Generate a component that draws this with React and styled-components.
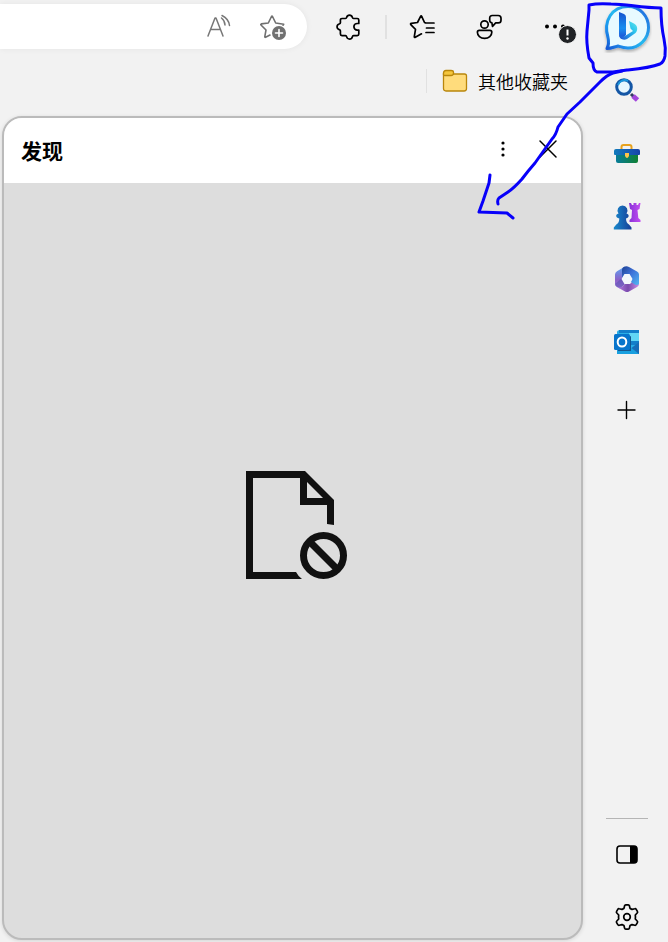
import React from "react";
import styled, { createGlobalStyle } from "styled-components";

const GlobalStyle = createGlobalStyle`
  * { box-sizing: border-box; }
  body {
    margin: 0;
    background: #f2f2f2;
    color: #000;
    font-family: "Noto Sans CJK SC", "Liberation Sans", sans-serif;
  }
`;

const Window = styled.div`
  position: relative;
  display: flex;
  min-height: 100vh;
  background: #f2f2f2;
`;

const Main = styled.main`
  flex: 1;
  min-width: 0;
  display: flex;
  flex-direction: column;
`;

const Toolbar = styled.header`
  display: flex;
  align-items: center;
  gap: 6px;
  height: 53px;
`;

const AddressBar = styled.div`
  flex: 1;
  min-width: 0;
  display: flex;
  align-items: center;
  height: 45px;
  margin-right: 6px;
  padding-right: 7px;
  border-radius: 0 23px 23px 0;
  background: #fff;
  box-shadow: 0 0 6px rgba(0, 0, 0, 0.06);
`;

const AddressInput = styled.input`
  flex: 1;
  min-width: 0;
  height: 100%;
  border: 0;
  outline: 0;
  background: transparent;
`;

const IconButton = styled.button`
  flex: none;
  display: flex;
  align-items: center;
  justify-content: center;
  width: ${(p) => p.$width || 60}px;
  height: ${(p) => p.$height || 40}px;
  padding: 0;
  border: 0;
  background: transparent;
  color: ${(p) => p.$color || "#000"};
  cursor: pointer;
`;

const Separator = styled.span`
  width: ${(p) => p.$width || 2}px;
  height: 24px;
  background: #e1e1e1;
`;

const BookmarksBar = styled.nav`
  display: flex;
  align-items: center;
  justify-content: flex-end;
  gap: 15px;
  height: 63px;
  padding: 0 17px 8px 0;
`;

const FolderButton = styled.button`
  display: flex;
  align-items: center;
  gap: 10px;
  padding: 0;
  border: 0;
  background: transparent;
  color: #000;
  font-family: inherit;
  font-size: 18px;
  font-weight: 350;
  line-height: 26px;
  cursor: pointer;
`;

const Panel = styled.section`
  flex: 1;
  display: flex;
  flex-direction: column;
  margin: 0 2px 2px;
  border: 2px solid #bbb;
  border-radius: 20px;
  overflow: hidden;
  background: #ddd;
  box-shadow: 0 1px 4px rgba(0, 0, 0, 0.12);
`;

const PanelHeader = styled.div`
  display: flex;
  align-items: center;
  height: 65px;
  padding: 0 11px 4px 17px;
  background: #fff;
`;

const PanelTitle = styled.h1`
  flex: 1;
  margin: 0;
  padding-top: 3px;
  font-size: 21px;
  font-weight: 700;
  line-height: 30px;
`;

const PanelBody = styled.div`
  flex: 1;
  display: flex;
  align-items: center;
  justify-content: center;
  padding: 0 0 72px 8px;
`;

const Sidebar = styled.aside`
  flex: none;
  display: flex;
  flex-direction: column;
  justify-content: space-between;
  width: 83px;
  padding: 3px 0 1px;
`;

const SideGroup = styled.div`
  display: flex;
  flex-direction: column;
  align-items: center;
  gap: 15px;
`;

const AddSlot = styled.div`
  padding-top: 5px;
`;

const SideRule = styled.hr`
  width: 42px;
  height: 1px;
  margin: 0 0 -4px;
  border: 0;
  background: #b5b5b5;
`;

const InkLayer = styled.svg`
  position: absolute;
  top: 0;
  right: 0;
  pointer-events: none;
`;

const line = {
  fill: "none",
  stroke: "currentColor",
  strokeLinecap: "round",
  strokeLinejoin: "round",
};

const ReadAloud = () => (
  <svg width="26" height="26" viewBox="0 0 26 26" {...line} strokeWidth="1.500">
    <path d="M2 22 9 4h1l7 18M5 15.500h9M15.500 4c2 1.500 3.300 3.500 3.500 7M16 1.500c4 2 7 5.500 7.500 10" />
  </svg>
);

const StarAdd = () => (
  <svg width="28" height="28" viewBox="0 0 28 28" {...line} strokeWidth="1.600">
    <path d="m11 22-4.500 2.300q-.8.200-.7-.6L7 17l-5-5q-.6-.8.300-1.100L9.300 10l3.200-6.500q.5-.8 1 0L16.700 10l8 1.200-.7 1" />
    <circle cx="20" cy="20" r="7" fill="currentColor" stroke="none" />
    <path d="M20 16.500v7M16.500 20h7" stroke="#fff" />
  </svg>
);

const Puzzle = () => (
  <svg width="28" height="28" viewBox="0 0 28 28" {...line} strokeWidth="1.700">
    <path d="M7 5.500h3.500c.7 0 1-.5 1.200-1.200a2.900 2.900 0 0 1 5.600 0c.2.700.5 1.200 1.200 1.200h3.700c1 0 1.600.6 1.600 1.600v3.400h-1.600a3.300 3.300 0 0 0 0 6.600h1.600v4c0 1-.6 1.600-1.600 1.600h-3.700c-.7 0-1 .5-1.200 1.200a2.900 2.900 0 0 1-5.600 0c-.2-.7-.5-1.200-1.200-1.200H7c-1 0-1.600-.6-1.600-1.600v-3.300c0-.7-.5-1-1.200-1.200a2.900 2.900 0 0 1 0-5.600c.7-.2 1.200-.5 1.200-1.200V7.100c0-1 .6-1.600 1.600-1.600Z" />
  </svg>
);

const Favorites = () => (
  <svg width="28" height="28" viewBox="0 0 28 28" {...line} strokeWidth="1.700">
    <path d="m17 10-1.500-.5L12.700 3.300c-.3-.6-.8-.6-1.100 0L8.500 9.500l-6.200.9c-.8.100-1 .7-.5 1.200l4.700 4.700-1.200 7.300c-.1.800.4 1.100 1 .7l6.200-3.500M16.500 10H25M17.500 15H25M17 19.500h8" />
  </svg>
);

const Collaborate = () => (
  <svg width="28" height="28" viewBox="0 0 28 28" {...line} strokeWidth="1.700">
    <circle cx="9.500" cy="11.500" r="3.700" />
    <path d="M4.300 17.300h10.600c1.200 0 1.900.7 1.900 1.900 0 3.500-3 6.100-7.200 6.100s-7.200-2.600-7.200-6.100c0-1.200.7-1.900 1.900-1.900ZM17.300 2.500h5.900c1.800 0 2.800 1 2.800 2.700v2c0 1.700-1 2.700-2.800 2.700h-2.500l-3.200 3.500-.6-3.600c-1.600-.3-2.200-1.200-2.200-2.600v-2c0-1.700.8-2.700 2.600-2.700Z" />
  </svg>
);

const MoreAlert = () => (
  <svg width="60" height="36" viewBox="0 0 60 36">
    <circle cx="22" cy="17.500" r="2" />
    <circle cx="30" cy="17.500" r="2" />
    <circle cx="38" cy="17.500" r="2" />
    <circle cx="42.500" cy="25.500" r="9" fill="#202225" stroke="#f2f2f2" />
    <path d="M42.500 20.500v6" stroke="#fff" strokeWidth="2" />
    <circle cx="42.500" cy="29.500" r="1.200" fill="#fff" />
  </svg>
);

const Folder = () => (
  <svg width="26" height="24" viewBox="0 0 26 24" stroke="#b9860b" strokeWidth="1.300">
    <path d="M1.500 5h21q2 0 2 2v12.500q0 2.500-2.500 2.500H4q-2.500 0-2.500-2.500Z" fill="#ffdc7c" />
    <path d="M1.500 6V4q0-2.500 2.500-2.500h5q2.500 0 2.500 1.800V4q0 2.500-2.500 2.500H3Q1.500 6.500 1.500 6Z" fill="#f5c63c" />
  </svg>
);

const Dots = () => (
  <svg width="20" height="20" viewBox="0 0 20 20">
    <circle cx="10" cy="4" r="1.600" />
    <circle cx="10" cy="10" r="1.600" />
    <circle cx="10" cy="16" r="1.600" />
  </svg>
);

const Close = () => (
  <svg width="20" height="20" viewBox="0 0 20 20" {...line} strokeWidth="1.500">
    <path d="m2 2 16 16M18 2 2 18" />
  </svg>
);

const BlockedPage = () => (
  <svg width="102" height="108" viewBox="0 0 102 108" role="img" aria-label="无法显示页面">
    <path fill="#111" fillRule="evenodd" d="M0 0h59l29 29v25l-7-1V34H54V7H7v94h43q2 4 6 7H0ZM61 11v16h16Z" />
    <g fill="none" stroke="#111" strokeWidth="7">
      <circle cx="77.500" cy="84.500" r="20" />
      <path d="m63.500 70.500 28 28" />
    </g>
  </svg>
);

const Bing = () => (
  <svg width="50" height="52" viewBox="0 0 50 52">
    <defs>
      <linearGradient id="bingEdge" x1="0" y1="1" x2="1" y2="0">
        <stop offset="0" stopColor="#1757d3" />
        <stop offset=".25" stopColor="#1b92ed" />
        <stop offset=".5" stopColor="#25b9ef" />
        <stop offset="1" stopColor="#2460dc" />
      </linearGradient>
      <linearGradient id="bingStem" x1="0" y1="0" x2="0" y2="1">
        <stop offset="0" stopColor="#1452ce" />
        <stop offset=".6" stopColor="#188ff0" />
        <stop offset="1" stopColor="#1b49d2" />
      </linearGradient>
      <linearGradient id="bingBowl" x1="0" y1="1" x2="1" y2="0">
        <stop offset="0" stopColor="#1b4bd4" />
        <stop offset=".65" stopColor="#2cc7ed" />
        <stop offset="1" stopColor="#65e5ec" />
      </linearGradient>
      <filter id="bingShade" x="-20%" y="-20%" width="140%" height="150%">
        <feDropShadow dx="0" dy="2" stdDeviation="1.500" floodOpacity=".3" />
      </filter>
    </defs>
    <path d="M26 5.500C38 5.500 46.500 15 46.500 26.500S37 47 26 47c-5 0-7-1-10-2-4 1-7 2.500-11 2.500 2-4 2-7 1-11C1 20 10 5.500 26 5.500Z" fill="#e8faff" stroke="url(#bingEdge)" strokeWidth="3" strokeLinejoin="round" filter="url(#bingShade)" />
    <path d="m17 11 5 2q2 1 2 3v18l-4 4q-3-1-3-5Z" fill="url(#bingStem)" />
    <path d="m27 20 5 2.500c4 2 4 7 1.500 9.500L25 38c-4 2-8-.5-8-5 1 3 4 3 6 2l8-5-2.500-2.500Z" fill="url(#bingBowl)" />
  </svg>
);

const Search = () => (
  <svg width="28" height="28" viewBox="0 0 28 28" fill="none">
    <path d="m18 18 3 3" stroke="#313b60" strokeWidth="3" />
    <path d="m20 20 4.500 4" stroke="#a245dc" strokeWidth="5" />
    <circle cx="11" cy="11" r="7.300" fill="#e7f7ff" stroke="#1456a5" strokeWidth="3" />
    <path d="M5 9a7 7 0 0 1 10-4" stroke="#1b96dc" strokeWidth="2" />
  </svg>
);

const Toolbox = () => (
  <svg width="28" height="22" viewBox="0 0 28 22">
    <defs>
      <linearGradient id="boxBase"><stop stopColor="#087c99" /><stop offset="1" stopColor="#108033" /></linearGradient>
      <linearGradient id="boxLid"><stop stopColor="#127bbc" /><stop offset="1" stopColor="#1743aa" /></linearGradient>
    </defs>
    <path d="M8.500 8V5q0-2 2-2h6q2 0 2 2v3" fill="none" stroke="#e8a21d" strokeWidth="2" />
    <path d="M3 11h22v8q0 2-2 2H5q-2 0-2-2Z" fill="url(#boxBase)" />
    <path d="M3 7h22q2 0 2 2v3q0 1-1 1H2q-1 0-1-1V9q0-2 2-2Z" fill="url(#boxLid)" />
    <path d="M12 11h4v3q-2 4-4 0Z" fill="#ffc44a" />
  </svg>
);

const Chess = () => (
  <svg width="28" height="30" viewBox="0 0 28 30">
    <defs>
      <linearGradient id="pawn"><stop stopColor="#1989cc" /><stop offset="1" stopColor="#173e98" /></linearGradient>
      <linearGradient id="rook"><stop stopColor="#8832d7" /><stop offset="1" stopColor="#c34df1" /></linearGradient>
    </defs>
    <path d="M16 2h2l1 2h1.500V2h3v2H25l1-2h1.500l-1 6-2 1 .8 8 2.200 2v2H16.500v-2l2-2 .5-8-2-1Z" fill="url(#rook)" />
    <path d="M9.500 4.500a5 5 0 0 1 4 8c3 1 3 4-.5 5 0 3 1 5 3 6l2.500 3v2H.8v-2l2.500-3c2-1 3-3 3-6-4-1-4-4-.8-5a5 5 0 0 1 4-8Z" fill="url(#pawn)" />
  </svg>
);

const Microsoft365 = () => (
  <svg width="28" height="28" viewBox="0 0 28 28">
    <defs>
      <linearGradient id="hexLeft" x1="0" y1="0" x2="0" y2="1"><stop stopColor="#5ba8f5" /><stop offset=".6" stopColor="#8a62c8" /><stop offset="1" stopColor="#a276dc" /></linearGradient>
      <linearGradient id="hexBase" x1="0" y1="0" x2="1" y2="0"><stop stopColor="#b77be6" /><stop offset=".5" stopColor="#7a4bad" /><stop offset="1" stopColor="#c98be6" /></linearGradient>
      <linearGradient id="hexRight" x1="0" y1="0" x2="1" y2="1"><stop stopColor="#1f4192" /><stop offset=".45" stopColor="#3d71d8" /><stop offset="1" stopColor="#53b6f2" /></linearGradient>
    </defs>
    <path d="m12 1.500-8 4.700Q2 7.500 2 9.500V19q0 2 2 3l3 1.500 5-4.500-3-5 3-5Z" fill="url(#hexLeft)" />
    <path d="M4 22q4 2 8-3h5l4-4 5 3v1q0 2-2 3l-8 4.500q-2 1-4 0Z" fill="url(#hexBase)" />
    <path d="M9 13V5q0-3 3-3.500 2-.7 4 .5l8 4.500q2 1 2 3V19q-2 2-5 0l-3-2 1-3-3-5h-4Z" fill="url(#hexRight)" />
    <path d="m2 19 7-6 3 6q-4 5-8 3-2-1-2-3Z" fill="#2c3f96" opacity=".3" />
    <path d="M11.500 9h5l3 5-3 5h-5l-3-5Z" fill="#f3f6fc" />
  </svg>
);

const Outlook = () => (
  <svg width="28" height="28" viewBox="0 0 28 28">
    <path d="M8 2h16q2 0 2 2v20q0 2-2 2H4V4q0-2 4-2Z" fill="#29aee7" />
    <path d="M6 2h20v3H6ZM16 12h10v5H16Z" fill="#147fca" />
    <path d="M16 5h10v8H16Z" fill="#62d7f5" />
    <path d="M26 14v12H11Z" fill="#176db8" />
    <path d="m16 18 10 8H4v-4Z" fill="#189fdf" />
    <path d="M5 8h12q1 0 1 1v14H5Z" fill="#15568d" />
    <rect x="1" y="6" width="16" height="16" rx="1.500" fill="#0875cc" />
    <ellipse cx="9" cy="14" rx="4.300" ry="4.600" fill="none" stroke="#fff" strokeWidth="2" />
  </svg>
);

const Plus = () => (
  <svg width="20" height="20" viewBox="0 0 20 20" {...line} strokeWidth="1.400">
    <path d="M9.500 1.500v17M1 10h17" />
  </svg>
);

const SidePane = () => (
  <svg width="24" height="20" viewBox="0 0 24 20">
    <rect x="2" y="2" width="20" height="17" rx="3" fill="none" stroke="#000" strokeWidth="1.600" />
    <path d="M15 2h4q3 0 3 3v11q0 3-3 3h-4Z" />
  </svg>
);

const Gear = () => (
  <svg width="28" height="28" viewBox="0 0 28 28" {...line} strokeWidth="1.700">
    <path d="m11 5.400.6-2.600q.2-1 1.200-1h2.400q1 0 1.200 1l.6 2.600q1 .4 2 1l2.700-.7q1-.3 1.500.6l1.200 2.100q.5.900-.2 1.600L22.300 12q.3 2 0 4l1.900 2q.7.700.2 1.600l-1.200 2.100q-.5.900-1.500.6l-2.700-.7q-1 .6-2 1l-.6 2.600q-.2 1-1.200 1h-2.400q-1 0-1.200-1l-.6-2.600q-1-.4-2-1l-2.700.7q-1 .3-1.500-.6l-1.200-2.100q-.5-.9.200-1.600l1.900-2q-.3-2 0-4l-1.900-2q-.7-.7-.2-1.600l1.200-2.100q.5-.9 1.500-.6l2.700.7q1-.6 2-1Z" />
    <circle cx="14" cy="14" r="3.300" />
  </svg>
);

const sideApps = [
  { name: "发现", Icon: Bing },
  { name: "搜索", Icon: Search },
  { name: "工具", Icon: Toolbox },
  { name: "游戏", Icon: Chess },
  { name: "Microsoft 365", Icon: Microsoft365 },
  { name: "Outlook", Icon: Outlook },
];

function SideButton({ name, Icon }) {
  return (
    <IconButton aria-label={name} $width={55} $height={48}>
      <Icon />
    </IconButton>
  );
}

export default function App() {
  return (
    <>
      <GlobalStyle />
      <Window>
        <Main>
          <Toolbar>
            <AddressBar>
              <AddressInput type="text" aria-label="地址栏" />
              <IconButton aria-label="大声朗读" $width={54} $color="#777"><ReadAloud /></IconButton>
              <IconButton aria-label="添加到收藏夹" $width={54} $color="#707070"><StarAdd /></IconButton>
            </AddressBar>
            <IconButton aria-label="扩展"><Puzzle /></IconButton>
            <Separator />
            <IconButton aria-label="收藏夹"><Favorites /></IconButton>
            <IconButton aria-label="协作"><Collaborate /></IconButton>
            <IconButton aria-label="设置及其他"><MoreAlert /></IconButton>
          </Toolbar>
          <BookmarksBar aria-label="收藏夹栏">
            <Separator $width={1} />
            <FolderButton><Folder />其他收藏夹</FolderButton>
          </BookmarksBar>
          <Panel>
            <PanelHeader>
              <PanelTitle>发现</PanelTitle>
              <IconButton aria-label="更多选项" $width={45}><Dots /></IconButton>
              <IconButton aria-label="关闭" $width={45}><Close /></IconButton>
            </PanelHeader>
            <PanelBody><BlockedPage /></PanelBody>
          </Panel>
        </Main>
        <Sidebar aria-label="侧边栏">
          <SideGroup>
            {sideApps.map((app) => <SideButton key={app.name} {...app} />)}
            <AddSlot><SideButton name="添加" Icon={Plus} /></AddSlot>
          </SideGroup>
          <SideGroup>
            <SideRule />
            <SideButton name="侧边栏布局" Icon={SidePane} />
            <SideButton name="设置" Icon={Gear} />
          </SideGroup>
        </Sidebar>
        <InkLayer width="200" height="230" viewBox="468 0 200 230" fill="none" stroke="#0800fa" strokeWidth="3" strokeLinecap="round" strokeLinejoin="round" aria-hidden="true">
          <path d="M589 5Q598 3 611 4C628 4 640 8 661 8C661 20 662 30 664 39Q666 48 665 56Q664 62 660 64C650 68 638 69 627 70L613 72H597Q593 71 593 63L589 58Q586 42 587 31L589 10Z" />
          <path d="m622 71-9 2q-6 2-13 9l-20 20-13 12-9 13q-2 8-6 12l-17 24q-7 8-13 16-8 9-14 13l-9 6q-2 2-1 6M490 175l-1 8-6 18-4 11 28 1 6 5" />
        </InkLayer>
      </Window>
    </>
  );
}
